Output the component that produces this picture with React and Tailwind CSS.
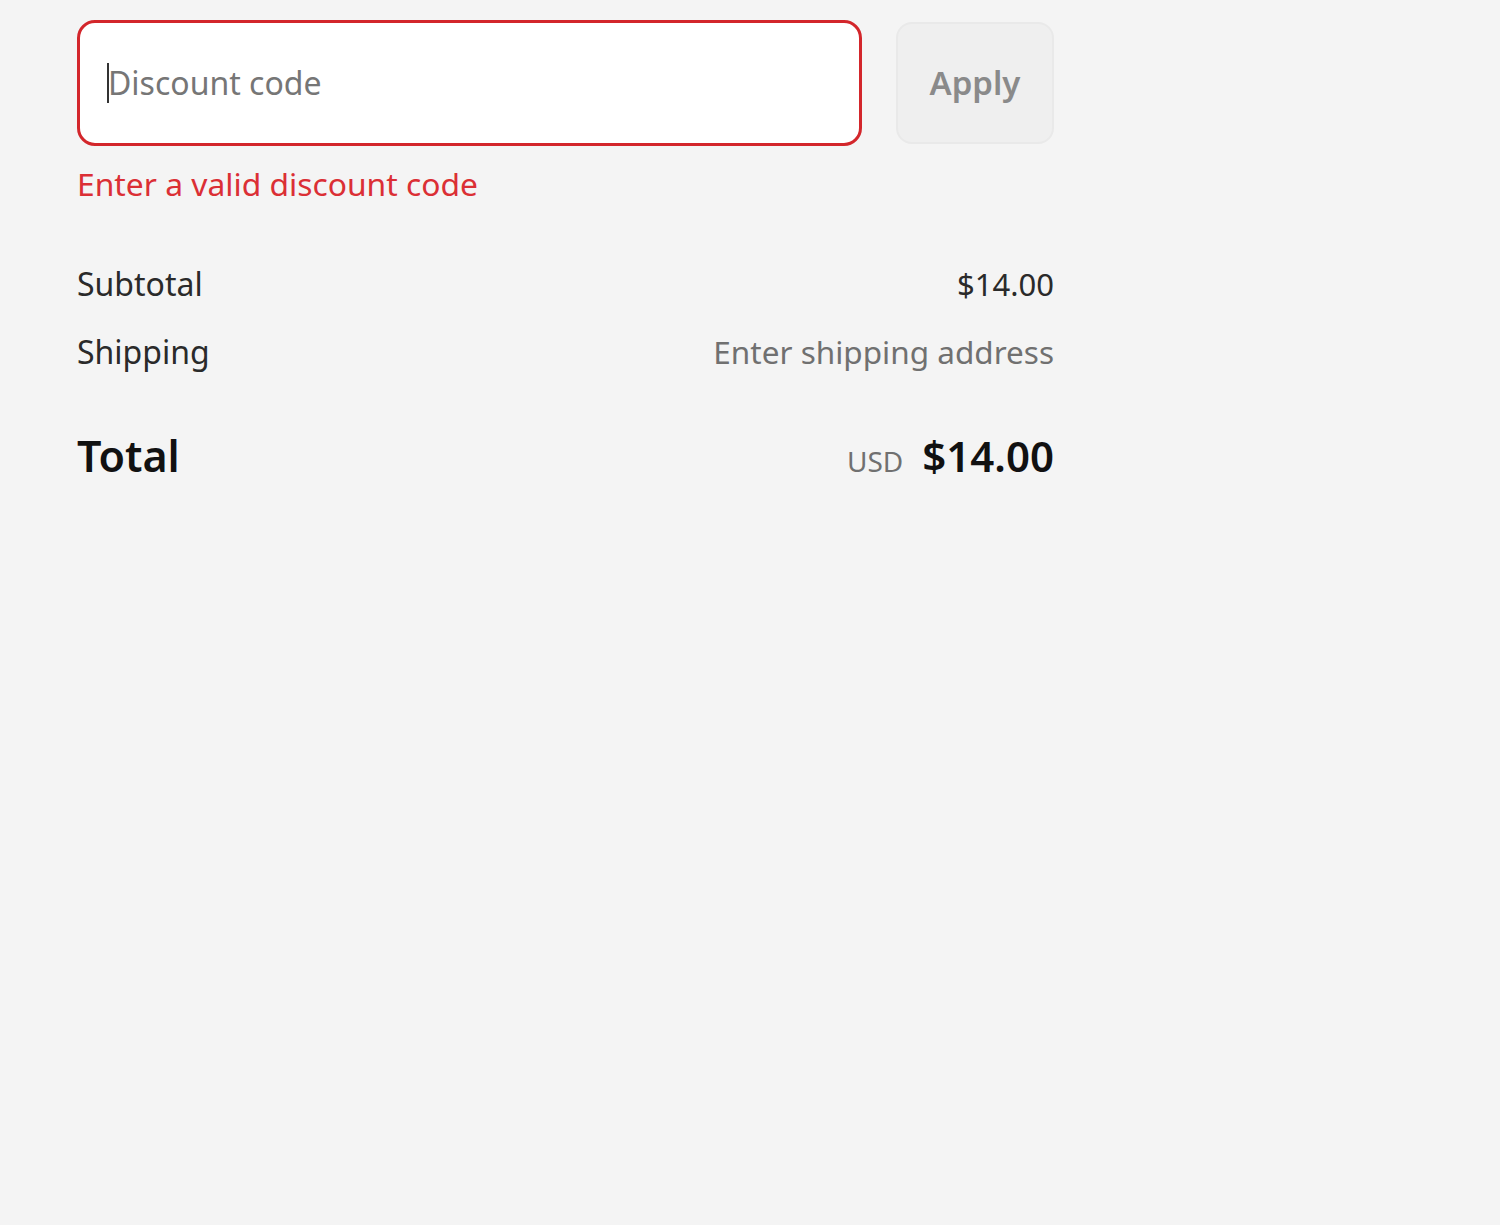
export default function App() {
  return (
    <div className="min-h-[1225px] w-full bg-[#f4f4f4]" style={{ fontFamily: '"Noto Sans", "Open Sans", sans-serif' }}>
      <div className="w-[1054px] pl-[77px] pt-[20px]">
        <div className="flex gap-[34px]">
          <div className="flex h-[126px] flex-1 items-center rounded-[18px] border-[3px] border-[#d3262b] bg-white pl-[27px]">
            <span className="h-[40px] w-[2px] bg-[#333]"></span>
            <span className="text-[32px] leading-none text-[#767676] -ml-[1px]">Discount code</span>
          </div>
          <button className="flex h-[122px] w-[158px] mt-[2px] items-center justify-center rounded-[16px] border-[2px] border-[#e9e9e9] bg-[#efefef] text-[33px] font-semibold text-[#8a8a8a]">
            Apply
          </button>
        </div>
        <div className="mt-[18px] text-[31.8px] leading-[40px] text-[#db2f35]">Enter a valid discount code</div>
        <div className="mt-[58px] flex items-baseline justify-between text-[32px] leading-[44px] text-[#2a2a2a]">
          <span>Subtotal</span>
          <span className="text-[31px]">$14.00</span>
        </div>
        <div className="mt-[24px] flex items-baseline justify-between leading-[44px]">
          <span className="text-[32px] text-[#2a2a2a]">Shipping</span>
          <span className="text-[31.5px] text-[#707070]">Enter shipping address</span>
        </div>
        <div className="mt-[52px] flex items-baseline justify-between">
          <span className="text-[43px] font-semibold leading-[60px] text-[#111]">Total</span>
          <span className="flex items-baseline gap-[19px]">
            <span className="text-[28px] text-[#707070]">USD</span>
            <span className="text-[42px] font-semibold leading-[60px] text-[#111]">$14.00</span>
          </span>
        </div>
      </div>
    </div>
  );
}
